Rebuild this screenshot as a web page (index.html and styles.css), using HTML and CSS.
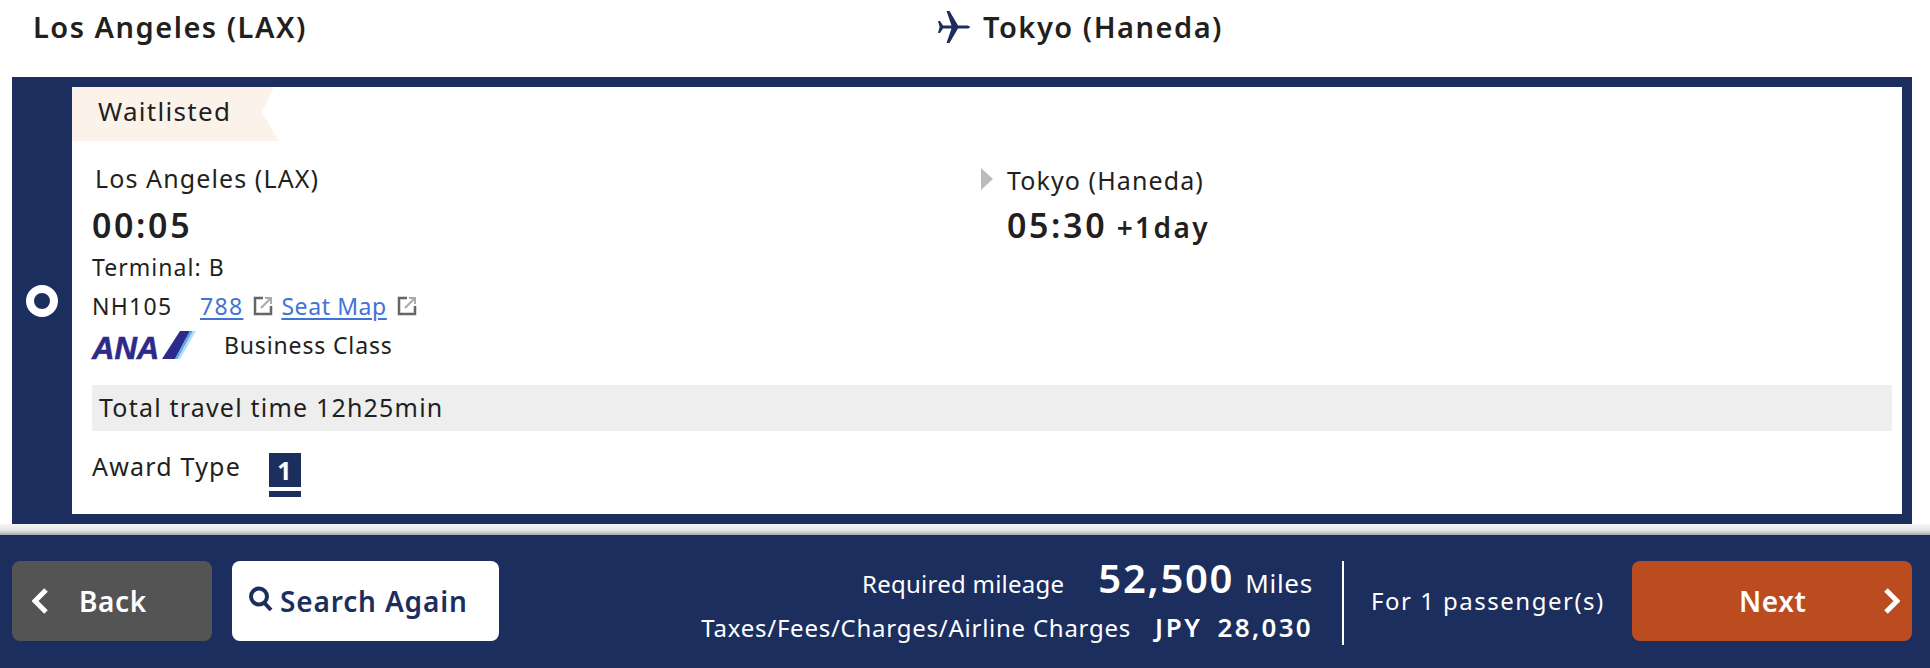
FILE: index.html
```html
<!DOCTYPE html>
<html lang="en">
  <head>
    <meta charset="UTF-8" />
    <title>Flight selection</title>
    <link rel="stylesheet" href="styles.css">
  </head>

  <body>
    <div class="page">
      <div class="route">
        <div class="route-from">Los Angeles (LAX)</div>
        <svg class="plane" viewBox="0 0 32 32"><path d="M32 16c0-1-2-1.600-4-1.600h-8L11.500 0h-3l5 14.400H5L2 10H0l1.600 6L0 22h2l3-4.400h8.500l-5 14.400h3L20 17.600h8c2 0 4-.6 4-1.600z"/></svg>
        <div class="route-to">Tokyo (Haneda)</div>
      </div>

      <div class="flight">
        <div class="radio-col"><span class="radio"></span></div>
        <div class="card">
          <div class="tag">Waitlisted</div>
          <div class="legs">
            <div class="leg-from">
              <div class="city">Los Angeles (LAX)</div>
              <div class="time">00:05</div>
              <div class="terminal">Terminal: B</div>
              <div class="flight-no">
                <span class="nh">NH105</span>
                <a class="link" href="#">788</a>
                <svg class="ext" viewBox="0 0 20 20"><path class="ext-box" d="M10 2H2v16h16v-8"/><path class="ext-arrow" d="M8 12 18 2M12 2h6v6"/></svg>
                <a class="link seat" href="#">Seat Map</a>
                <svg class="ext" viewBox="0 0 20 20"><path class="ext-box" d="M10 2H2v16h16v-8"/><path class="ext-arrow" d="M8 12 18 2M12 2h6v6"/></svg>
              </div>
              <div class="class-row">
                <svg class="ana" viewBox="0 0 104 28">
                  <text x="0" y="28" class="ana-text">ANA</text>
                  <polygon points="70,28 88,0 98,0 83,28" fill="#2d2a8a"/>
                  <polygon points="83,28 98,0 101,0 85.500,28" fill="#5aa5e6"/>
                  <polygon points="85.500,28 101,0 104,0 88,28" fill="#b4dcf6"/>
                </svg>
                <span class="cabin">Business Class</span>
              </div>
            </div>
            <div class="leg-to">
              <span class="arrow"></span>
              <div>
                <div class="city">Tokyo (Haneda)</div>
                <div class="time">05:30 <span class="plus">+1day</span></div>
              </div>
            </div>
          </div>
          <div class="total">Total travel time 12h25min</div>
          <div class="award">
            <span class="award-label">Award Type</span>
            <span class="badge"><span class="badge-num">1</span></span>
          </div>
        </div>
      </div>

      <div class="shade"></div>

      <div class="bar">
        <a class="btn btn-back" href="#">
          <svg class="chev" viewBox="0 0 16 26"><path d="M14 2 3 13l11 11"/></svg>
          Back
        </a>
        <a class="btn btn-search" href="#">
          <svg class="lens" viewBox="0 0 26 26"><circle cx="11" cy="10.500" r="8"/><path d="M16.500 17 23 24"/></svg>
          Search Again
        </a>
        <div class="fare">
          <div class="fare-line">
            <span class="mileage">Required mileage</span>
            <span class="miles">52,500</span>
            <span class="miles-unit">Miles</span>
          </div>
          <div class="fare-line fare-tax">
            <span>Taxes/Fees/Charges/Airline Charges</span>
            <b class="jpy">JPY</b>
            <b class="yen">28,030</b>
          </div>
        </div>
        <div class="pax">For 1 passenger(s)</div>
        <a class="btn btn-next" href="#">
          Next
          <svg class="chev chev-next" viewBox="0 0 16 26"><path d="M2 2l11 11L2 24"/></svg>
        </a>
      </div>
    </div>
  </body>
</html>
```

FILE: styles.css
```css
* {
  padding: 0;
  margin: 0;
  box-sizing: border-box;
}

html,
body {
  width: 100%;
  height: 100%;
  overflow: hidden;
  background-color: #fff;
}

body {
  font-family: "Noto Sans", "DejaVu Sans", sans-serif;
  color: #231f20;
}

.page {
  height: 668px;
  display: flex;
  flex-direction: column;
}

/* route heading */
.route {
  height: 77px;
  padding: 0 0 24px 33px;
  display: flex;
  align-items: center;
  font-size: 29px;
  font-weight: 600;
  letter-spacing: 1.5px;
}

.route-from {
  width: 905px;
}

.plane {
  width: 32px;
  height: 32px;
  fill: #1c2e5e;
  margin-right: 13px;
}

/* flight card */
.flight {
  height: 447px;
  margin: 0 18px 0 12px;
  padding: 10px 10px 10px 0;
  display: flex;
  background-color: #1c2e5e;
}

.radio-col {
  width: 60px;
  display: flex;
  justify-content: center;
  padding-top: 198px;
}

.radio {
  width: 32px;
  height: 32px;
  border: 8px solid #fff;
  border-radius: 50%;
}

.card {
  flex: 1;
  padding: 0 10px 0 20px;
  background-color: #fff;
}

.tag {
  width: 207px;
  height: 54px;
  margin-left: -20px;
  padding-left: 26px;
  font-size: 26px;
  line-height: 48px;
  letter-spacing: 1.3px;
  background-color: #fbf3ea;
  clip-path: polygon(0 0, 202px 0, 190px 25px, 207px 100%, 0 100%);
}

.legs {
  display: flex;
  margin-top: 22px;
}

.leg-from {
  width: 889px;
}

.leg-to {
  display: flex;
}

.arrow {
  width: 0;
  height: 0;
  margin: 5px 14px 0 0;
  border-left: 12px solid #bbb;
  border-top: 11px solid transparent;
  border-bottom: 11px solid transparent;
}

.city {
  height: 30px;
  line-height: 30px;
  padding-left: 3px;
  font-size: 25px;
  letter-spacing: 1.1px;
}

.leg-to .city {
  padding-left: 0;
  line-height: 34px;
}

.time {
  height: 40px;
  margin-top: 12px;
  line-height: 40px;
  font-size: 34px;
  font-weight: 600;
  letter-spacing: 2.600px;
}

.plus {
  margin-left: -2px;
  font-size: 28px;
  letter-spacing: 2.400px;
}

.terminal {
  height: 30px;
  margin-top: 7px;
  line-height: 30px;
  font-size: 23px;
  letter-spacing: 1.050px;
}

.flight-no {
  height: 32px;
  margin-top: 8px;
  display: flex;
  align-items: center;
  font-size: 23px;
  letter-spacing: 1.300px;
}

.nh {
  width: 108px;
}

.link {
  color: #3f73d6;
  text-decoration-thickness: 2px;
  text-underline-offset: 3px;
}

.seat {
  letter-spacing: 0.6px;
}

.ext {
  width: 20px;
  height: 20px;
  margin: 0 8px 0 10px;
  fill: none;
}

.ext-box {
  stroke: #666;
  stroke-width: 2.500;
}

.ext-arrow {
  stroke: #aaa;
  stroke-width: 2;
}

.class-row {
  height: 28px;
  margin-top: 9px;
  display: flex;
  align-items: center;
  font-size: 23px;
  letter-spacing: 0.85px;
}

.ana {
  width: 104px;
  height: 28px;
  margin-right: 28px;
  overflow: visible;
}

.ana-text {
  font-family: "Liberation Sans", sans-serif;
  font-size: 31px;
  font-weight: bold;
  font-style: italic;
  letter-spacing: 0;
  fill: #2d2a8a;
  stroke: #2d2a8a;
  stroke-width: 0.6;
}

.total {
  height: 46px;
  margin-top: 26px;
  padding-left: 7px;
  line-height: 44px;
  font-size: 25px;
  letter-spacing: 1.200px;
  background-color: #eee;
}

.award {
  margin-top: 22px;
  display: flex;
  font-size: 25px;
  letter-spacing: 1.200px;
}

.award-label {
  width: 177px;
  margin-top: -4px;
}

.badge {
  width: 32px;
  padding-bottom: 4px;
  border-bottom: 6px solid #1c2e5e;
}

.badge-num {
  display: block;
  height: 34px;
  color: #fff;
  font-weight: bold;
  line-height: 34px;
  text-align: center;
  background-color: #1c2e5e;
}

.shade {
  height: 11px;
  background: linear-gradient(#f6f6f6, #e2e2e2 60%, #a9a9a9);
}

/* bottom bar */
.bar {
  flex: 1;
  padding: 0 18px 1px 12px;
  display: flex;
  align-items: center;
  color: #fff;
  background-color: #1c2e5e;
}

.btn {
  height: 80px;
  display: flex;
  align-items: center;
  border-radius: 8px;
  font-size: 28px;
  font-weight: 600;
  letter-spacing: 0.6px;
  text-decoration: none;
}

.btn-back {
  width: 200px;
  padding-left: 20px;
  color: #fff;
  background-color: #545454;
}

.chev {
  width: 16px;
  height: 26px;
  margin-right: 31px;
  fill: none;
  stroke: #fff;
  stroke-width: 5;
}

.btn-search {
  width: 267px;
  margin-left: 20px;
  padding-left: 16px;
  letter-spacing: 0.85px;
  color: #1c2e5e;
  background-color: #fff;
}

.lens {
  width: 26px;
  height: 26px;
  margin: -4px 6px 0 0;
  fill: none;
  stroke: #1c2e5e;
  stroke-width: 4;
}

.fare {
  flex: 1;
  padding-bottom: 5px;
  font-size: 24px;
  letter-spacing: 0.75px;
}

.fare-line {
  height: 59px;
  display: flex;
  justify-content: flex-end;
  align-items: baseline;
}

.mileage {
  letter-spacing: 0.25px;
}

.miles {
  margin-left: 34px;
  font-size: 40px;
  font-weight: 600;
  letter-spacing: 1.700px;
}

.miles-unit {
  margin-left: 11px;
  font-size: 26px;
}

.fare-tax {
  height: 38px;
}

.jpy {
  margin-left: 24px;
  font-size: 26px;
  font-weight: 600;
  letter-spacing: 2.600px;
}

.yen {
  margin-left: 15px;
  font-size: 26px;
  font-weight: 600;
  letter-spacing: 2.300px;
}

.pax {
  width: 290px;
  height: 84px;
  margin: 4px 0 0 29px;
  padding-left: 27px;
  border-left: 2px solid #fff;
  line-height: 80px;
  font-size: 24px;
  letter-spacing: 1.500px;
}

.btn-next {
  width: 280px;
  padding-left: 107px;
  justify-content: space-between;
  padding-right: 12px;
  color: #fff;
  background-color: #bb4c20;
}

.chev-next {
  margin-right: 0;
}
```
